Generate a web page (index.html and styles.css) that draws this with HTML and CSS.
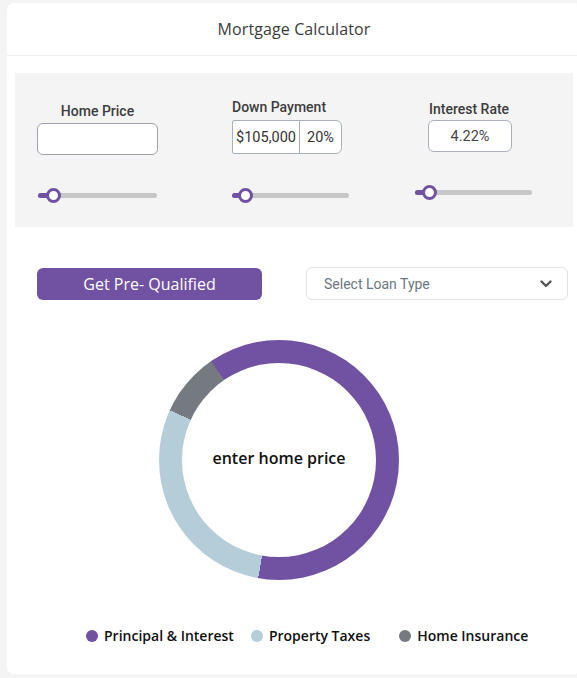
FILE: index.html
```html
<!DOCTYPE html>
<html>
<head>
<meta charset="utf-8">
<title>Mortgage Calculator</title>
<link rel="stylesheet" href="styles.css">
</head>
<body>
<div class="wrap">
  <div class="header">Mortgage Calculator</div>
  <div class="card">
    <div class="panel">
      <div class="col col-home">
        <div class="label">Home Price</div>
        <div class="box box-home"></div>
        <div class="slider"><div class="fill" style="width:15px"></div><div class="thumb" style="left:15px"></div></div>
      </div>
      <div class="col col-down">
        <div class="label">Down Payment</div>
        <div class="box box-down"><span class="seg seg-amt">$105,000</span><span class="seg seg-pct">20%</span></div>
        <div class="slider"><div class="fill" style="width:13px"></div><div class="thumb" style="left:13px"></div></div>
      </div>
      <div class="col col-rate">
        <div class="label">Interest Rate</div>
        <div class="box box-rate">4.22%</div>
        <div class="slider"><div class="fill" style="width:14px"></div><div class="thumb" style="left:14px"></div></div>
      </div>
    </div>
    <div class="actions">
      <div class="btn">Get Pre- Qualified</div>
      <div class="select">
        <span>Select Loan Type</span>
        <svg class="chev" width="12" height="8" viewBox="0 0 12 8"><polyline points="1.5,1.5 6,6 10.5,1.5" fill="none" stroke="#555" stroke-width="2.4" stroke-linecap="round" stroke-linejoin="round"/></svg>
      </div>
    </div>
    <div class="donut">
      <div class="hole">enter home price</div>
    </div>
    <div class="legend">
      <div class="item"><span class="dot dot-pi"></span>Principal &amp; Interest</div>
      <div class="item item-tax"><span class="dot dot-tax"></span>Property Taxes</div>
      <div class="item item-ins"><span class="dot dot-ins"></span>Home Insurance</div>
    </div>
  </div>
</div>
</body>
</html>
```
FILE: styles.css
```css
html, body {
  margin: 0;
  padding: 0;
}
body {
  background: #f4f4f4;
  overflow: hidden;
  width: 577px;
  height: 678px;
  font-family: "Open Sans", "Liberation Sans", sans-serif;
}
.wrap {
  margin: 3px 0 0 7px;
  width: 574px;
}
.header {
  background: #fff;
  height: 52px;
  border-radius: 7px 7px 0 0;
  border-bottom: 1px solid #efefef;
  display: flex;
  align-items: center;
  justify-content: center;
  font-size: 16px;
  font-weight: 500;
  color: #3b3b3b;
  letter-spacing: 0.1px;
}
.card {
  background: #fff;
  border-radius: 0 0 7px 7px;
  height: 601px;
  padding: 17px 8px 0;
}
.panel {
  background: #f4f4f4;
  height: 154px;
  display: flex;
  align-items: flex-start;
  padding-left: 22px;
  font-family: Roboto, "Liberation Sans", sans-serif;
}
.col {
  display: flex;
  flex-direction: column;
}
.label {
  font-size: 14px;
  font-weight: 500;
  color: #3d3d3d;
  line-height: 16px;
  white-space: nowrap;
}
.col-home {
  width: 121px;
  padding-top: 30px;
  align-items: center;
}
.col-home .box { margin-top: 4px; }
.col-home .slider { margin-top: 38px; width: 119px; }
.col-down {
  width: 117px;
  margin-left: 74px;
  padding-top: 26px;
}
.col-down .box { margin-top: 5px; }
.col-down .slider { margin-top: 39px; }
.col-rate {
  width: 117px;
  margin-left: 66px;
  padding-top: 28px;
  align-items: flex-start;
}
.col-rate .label { margin-left: 14px; }
.col-rate .box { margin-top: 3px; margin-left: 13px; }
.col-rate .slider { margin-top: 38px; }
.box {
  background: #fff;
  border: 1px solid #9ca3ab;
  box-sizing: border-box;
  font-size: 14.5px;
  color: #333;
}
.box-home {
  width: 121px;
  height: 32px;
  border-radius: 6px;
}
.box-down {
  width: 110px;
  height: 34px;
  border-radius: 2px 6px 6px 2px;
  display: flex;
  border-color: #a9b0b8;
}
.seg {
  display: flex;
  align-items: center;
  justify-content: center;
  height: 100%;
}
.seg-amt {
  width: 66px;
  border-right: 1px solid #a9b0b8;
}
.seg-pct {
  flex: 1;
}
.box-rate {
  width: 84px;
  height: 32px;
  border-radius: 6px;
  display: flex;
  align-items: center;
  justify-content: center;
  color: #444;
  border-color: #a9b0b8;
}
.slider {
  position: relative;
  width: 117px;
  height: 5px;
  border-radius: 3px;
  background: #c7c7c7;
}
.fill {
  height: 5px;
  border-radius: 3px;
  background: #7152a2;
}
.thumb {
  position: absolute;
  top: -5px;
  width: 9px;
  height: 9px;
  margin-left: -7.5px;
  border: 3px solid #7152a2;
  border-radius: 50%;
  background: #fff;
}
.actions {
  display: flex;
  align-items: flex-end;
  margin-top: 40px;
  padding-left: 22px;
}
.btn {
  width: 225px;
  height: 32px;
  border-radius: 6px;
  background: #7152a2;
  color: #fff;
  font-size: 16px;
  font-weight: 500;
  display: flex;
  align-items: center;
  justify-content: center;
}
.select {
  margin-left: 44px;
  width: 262px;
  height: 33px;
  box-sizing: border-box;
  border: 1px solid #e2e2e2;
  border-radius: 6px;
  display: flex;
  align-items: center;
  justify-content: space-between;
  padding: 0 15px 0 17px;
  font-family: Roboto, "Liberation Sans", sans-serif;
  font-size: 14px;
  color: #6b7681;
}
.donut {
  margin: 40px 0 0 144px;
  width: 240px;
  height: 240px;
  border-radius: 50%;
  background: conic-gradient(#7152a2 0deg 190deg, #b5cdd9 190deg 294.5deg, #747a80 294.5deg 325.5deg, #7152a2 325.5deg 360deg);
  display: flex;
  align-items: center;
  justify-content: center;
}
.hole {
  width: 194px;
  height: 194px;
  box-sizing: border-box;
  padding-bottom: 4px;
  border-radius: 50%;
  background: #fff;
  display: flex;
  align-items: center;
  justify-content: center;
  font-size: 16px;
  font-weight: 600;
  color: #111;
}
.legend {
  display: flex;
  align-items: center;
  margin-top: 46px;
  padding-left: 71px;
  font-size: 14px;
  font-weight: 600;
  color: #111;
  line-height: 20px;
}
.item {
  display: flex;
  align-items: center;
  white-space: nowrap;
}
.item-tax { margin-left: 17px; }
.item-ins { margin-left: 29px; }
.dot {
  width: 12px;
  height: 12px;
  border-radius: 50%;
  margin-right: 6px;
}
.dot-pi { background: #7152a2; }
.dot-tax { background: #b5cdd9; }
.dot-ins { background: #747a80; }
```
